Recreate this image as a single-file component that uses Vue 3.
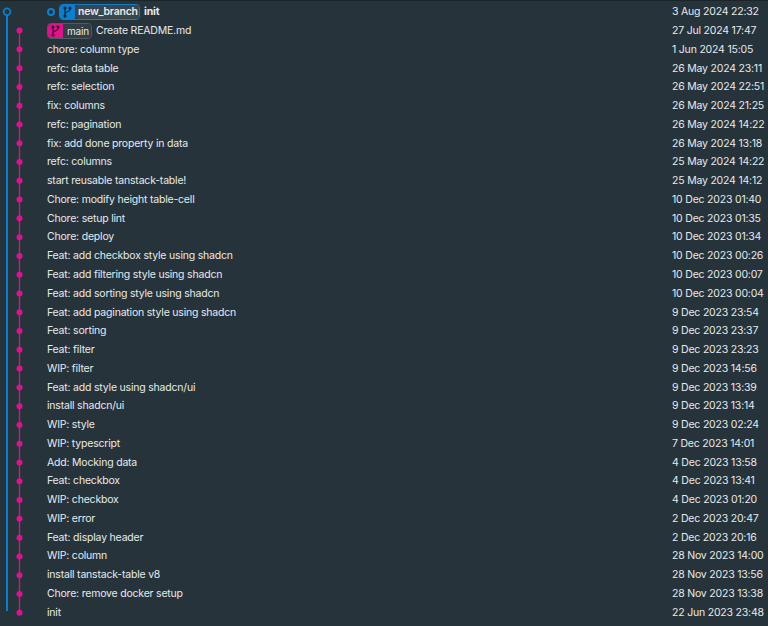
<script setup>
const rowH = 18.78
const top = 2.4
const commits = [
  ['init', '3 Aug 2024 22:32'],
  ['Create README.md', '27 Jul 2024 17:47'],
  ['chore: column type', '1 Jun 2024 15:05'],
  ['refc: data table', '26 May 2024 23:11'],
  ['refc: selection', '26 May 2024 22:51'],
  ['fix: columns', '26 May 2024 21:25'],
  ['refc: pagination', '26 May 2024 14:22'],
  ['fix: add done property in data', '26 May 2024 13:18'],
  ['refc: columns', '25 May 2024 14:22'],
  ['start reusable tanstack-table!', '25 May 2024 14:12'],
  ['Chore: modify height table-cell', '10 Dec 2023 01:40'],
  ['Chore: setup lint', '10 Dec 2023 01:35'],
  ['Chore: deploy', '10 Dec 2023 01:34'],
  ['Feat: add checkbox style using shadcn', '10 Dec 2023 00:26'],
  ['Feat: add filtering style using shadcn', '10 Dec 2023 00:07'],
  ['Feat: add sorting style using shadcn', '10 Dec 2023 00:04'],
  ['Feat: add pagination style using shadcn', '9 Dec 2023 23:54'],
  ['Feat: sorting', '9 Dec 2023 23:37'],
  ['Feat: filter', '9 Dec 2023 23:23'],
  ['WIP: filter', '9 Dec 2023 14:56'],
  ['Feat: add style using shadcn/ui', '9 Dec 2023 13:39'],
  ['install shadcn/ui', '9 Dec 2023 13:14'],
  ['WIP: style', '9 Dec 2023 02:24'],
  ['WIP: typescript', '7 Dec 2023 14:01'],
  ['Add: Mocking data', '4 Dec 2023 13:58'],
  ['Feat: checkbox', '4 Dec 2023 13:41'],
  ['WIP: checkbox', '4 Dec 2023 01:20'],
  ['WIP: error', '2 Dec 2023 20:47'],
  ['Feat: display header', '2 Dec 2023 20:16'],
  ['WIP: column', '28 Nov 2023 14:00'],
  ['install tanstack-table v8', '28 Nov 2023 13:56'],
  ['Chore: remove docker setup', '28 Nov 2023 13:38'],
  ['init', '22 Jun 2023 23:48'],
]
const cy = (i) => top + rowH * i + rowH / 2
</script>

<template>
  <div class="view">
    <svg class="graph" width="44" height="626" viewBox="0 0 44 626">
      <line x1="7" :y1="cy(0)" x2="7" y2="611" stroke="#0a7fd0" stroke-width="2" />
      <line x1="19.5" :y1="cy(1)" x2="19.5" :y2="cy(32)" stroke="#e0108f" stroke-width="1.3" />
      <circle cx="7" :cy="cy(0)" r="3.4" fill="#27333a" stroke="#0a7fd0" stroke-width="1.8" />
      <circle v-for="i in 32" :key="i" cx="19.5" :cy="cy(i)" r="3" fill="#e0108f" />
    </svg>
    <ul class="rows">
      <li v-for="(c, i) in commits" :key="i" class="row">
        <div class="subject">
          <template v-if="i === 0">
            <span class="head-dot"></span>
            <span class="ref ref-current">
              <span class="ref-icon icon-blue">
                <svg width="11" height="12" viewBox="0 0 11 12" fill="none" stroke="#0b2740" stroke-width="1.2"><path d="M3 1.5v9M8 2v1.5C8 6 3 5.5 3 8" /><circle cx="3" cy="2" r="1" fill="#0b2740" /><circle cx="8" cy="2" r="1" fill="#0b2740" /><circle cx="3" cy="10" r="1" fill="#0b2740" /></svg>
              </span>
              <span class="ref-name">new_branch</span>
            </span>
            <strong class="msg-bold">{{ c[0] }}</strong>
          </template>
          <template v-else-if="i === 1">
            <span class="ref ref-main">
              <span class="ref-icon icon-pink">
                <svg width="11" height="12" viewBox="0 0 11 12" fill="none" stroke="#3d0a2b" stroke-width="1.2"><path d="M3 1.5v9M8 2v1.5C8 6 3 5.5 3 8" /><circle cx="3" cy="2" r="1" fill="#3d0a2b" /><circle cx="8" cy="2" r="1" fill="#3d0a2b" /><circle cx="3" cy="10" r="1" fill="#3d0a2b" /></svg>
              </span>
              <span class="ref-name-plain">main</span>
            </span>
            <span>{{ c[0] }}</span>
          </template>
          <span v-else>{{ c[0] }}</span>
        </div>
        <div class="date">{{ c[1] }}</div>
      </li>
    </ul>
  </div>
</template>

<style>
html, body { margin: 0; background: #27333a; }
</style>

<style scoped>
.view {
  position: relative;
  width: 768px;
  height: 626px;
  overflow: hidden;
  background: #27333a;
  box-sizing: border-box;
  border-top: 1px solid #1b2429;
  font-family: Inter, "Liberation Sans", sans-serif;
  font-size: 10.5px;
  letter-spacing: -0.2px;
  color: #e6eaec;
}
.graph { position: absolute; left: 0; top: -1px; }
.rows {
  list-style: none;
  margin: 0;
  padding: 1.4px 0 0 47px;
}
.row {
  display: flex;
  align-items: center;
  justify-content: space-between;
  height: 18.78px;
  white-space: nowrap;
}
.subject { display: flex; align-items: center; gap: 4px; }
.date { width: 96px; }
.head-dot {
  width: 4px;
  height: 4px;
  border: 2px solid #0a7fd0;
  border-radius: 50%;
  margin-right: 0;
}
.ref {
  display: flex;
  align-items: center;
  height: 16px;
  border-radius: 4px;
  box-sizing: border-box;
  overflow: hidden;
}
.ref-current { border: 1.5px solid #0a7fd0; width: 81px; margin-left: 0; }
.ref-main { border: 1px solid #4f5b62; width: 45px; }
.ref-icon {
  display: flex;
  align-items: center;
  justify-content: center;
  flex: 0 0 15px;
  height: 100%;
}
.icon-blue { background: #0a7fd0; }
.icon-pink { background: #e0108f; }
.ref-name { flex: 1; padding-left: 3px; font-weight: 600; letter-spacing: -0.25px; background: #3a464d; height: 100%; display: flex; align-items: center; border-radius: 3px 0 0 3px; }
.ref-name-plain { flex: 1; padding-left: 4px; font-size: 10px; background: #323e45; height: 100%; display: flex; align-items: center; }
.msg-bold { font-weight: 700; }
</style>
